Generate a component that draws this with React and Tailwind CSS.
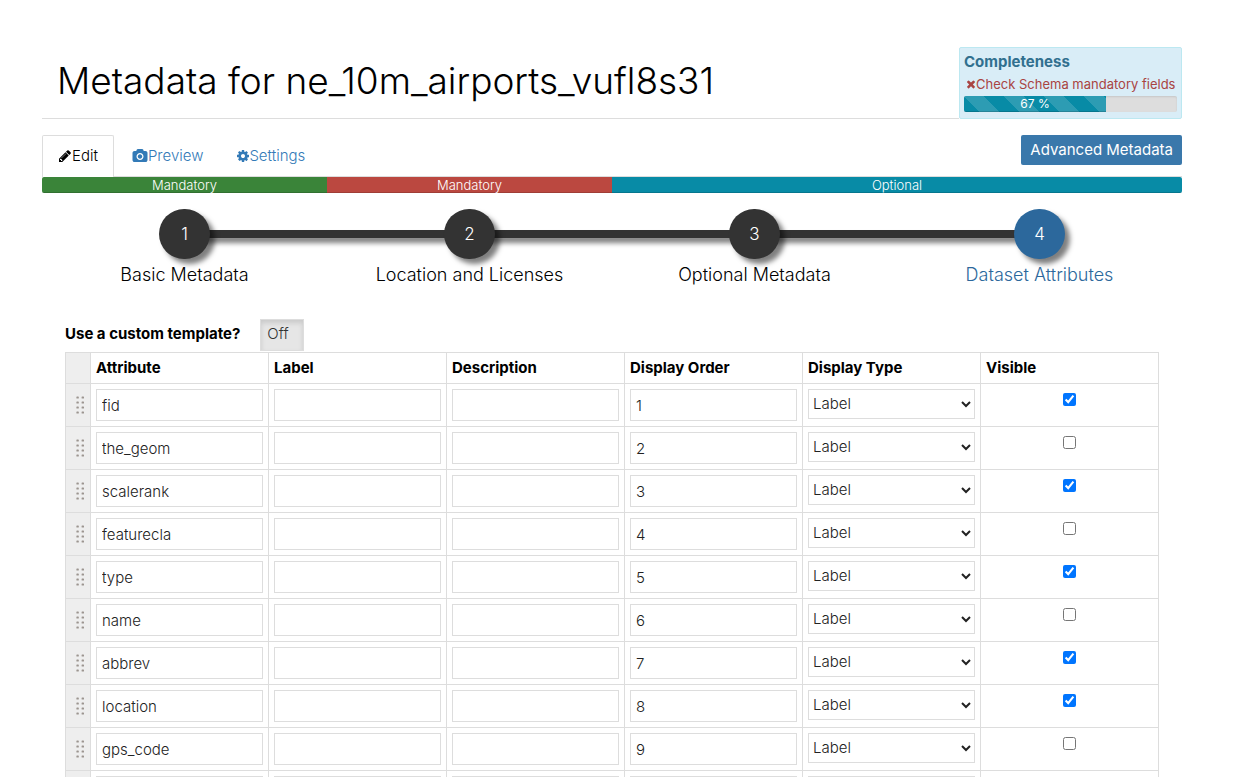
import React, { useState } from "react";

const ICONS = {
  pencil: {
    box: "128 0 1536 1792",
    d: "M491 1536l91-91-235-235-91 91v107h128v128h107zm523-928q0-22-22-22-10 0-17 7l-542 542q-7 7-7 17 0 22 22 22 10 0 17-7l542-542q7-7 7-17zm-54-192l416 416-832 832h-416v-416zm683 96q0 53-37 90l-166 166-416-416 166-165q36-38 90-38 53 0 91 38l235 234q37 39 37 91z",
  },
  camera: {
    box: "0 0 1920 1792",
    d: "M960 672q119 0 203.5 84.5t84.5 203.5-84.5 203.5-203.5 84.5-203.5-84.5-84.5-203.5 84.5-203.5 203.5-84.5zm704-416q106 0 181 75t75 181v896q0 106-75 181t-181 75h-1408q-106 0-181-75t-75-181v-896q0-106 75-181t181-75h224l51-136q19-49 69.5-84.5t103.5-35.5h512q53 0 103.5 35.5t69.5 84.5l51 136h224zm-704 1152q185 0 316.5-131.5t131.5-316.5-131.5-316.5-316.5-131.5-316.5 131.5-131.5 316.5 131.5 316.5 316.5 131.5z",
  },
  cog: {
    box: "128 0 1536 1792",
    d: "M1152 896q0-106-75-181t-181-75-181 75-75 181 75 181 181 75 181-75 75-181zm512-109v222q0 12-8 23t-20 13l-185 28q-19 54-39 91 35 50 107 138 10 12 10 25t-9 23q-27 37-99 108t-94 71q-12 0-26-9l-138-108q-44 23-91 38-16 136-29 186-7 28-36 28h-222q-14 0-24.5-8.5t-11.5-21.5l-28-184q-49-16-90-37l-141 107q-10 9-25 9-14 0-25-11-126-114-165-168-7-10-7-23 0-12 8-23 15-21 51-66.5t54-70.5q-27-50-41-99l-183-27q-13-2-21-12.5t-8-23.5v-222q0-12 8-23t19-13l186-28q14-46 39-92-40-57-107-138-10-12-10-24 0-10 9-23 26-36 98.5-107.5t94.5-71.5q13 0 26 10l138 107q44-23 91-38 16-136 29-186 7-28 36-28h222q14 0 24.5 8.5t11.5 21.5l28 184q49 16 90 37l142-107q9-9 24-9 13 0 25 10 129 119 165 170 7 8 7 22 0 12-8 23-15 21-51 66.5t-54 70.5q26 50 41 98l183 28q13 2 21 12.5t8 23.5z",
  },
  times: {
    box: "192 0 1408 1792",
    d: "M1490 1322q0 40-28 68l-136 136q-28 28-68 28t-68-28l-294-294-294 294q-28 28-68 28t-68-28l-136-136q-28-28-28-68t28-68l294-294-294-294q-28-28-28-68t28-68l136-136q28-28 68-28t68 28l294 294 294-294q28-28 68-28t68 28l136 136q28 28 28 68t-28 68l-294 294 294 294q28 28 28 68z",
  },
};

function Icon({ name, className }) {
  return (
    <svg viewBox={ICONS[name].box} className={className} fill="currentColor" aria-hidden="true">
      <path d={ICONS[name].d} />
    </svg>
  );
}

function Grip() {
  return (
    <svg viewBox="0 0 9 18" className="mr-[5px] ml-auto h-[18px] w-[9px]" fill="#9c9590" aria-hidden="true">
      {[0, 5, 10, 15].map((y) => (
        <g key={y}>
          <rect x="0.4" y={y + 0.5} width="2.4" height="2" rx="0.6" />
          <rect x="5.6" y={y + 0.5} width="2.4" height="2" rx="0.6" />
        </g>
      ))}
    </svg>
  );
}

const STEPS = ["Basic Metadata", "Location and Licenses", "Optional Metadata", "Dataset Attributes"];

const COLUMNS = ["Attribute", "Label", "Description", "Display Order", "Display Type", "Visible"];

const ATTRIBUTES = [
  ["fid", true],
  ["the_geom", false],
  ["scalerank", true],
  ["featurecla", false],
  ["type", true],
  ["name", false],
  ["abbrev", true],
  ["location", true],
  ["gps_code", false],
  ["iata_code", true],
];

const FIELD = "block h-8 w-full border border-[#ddd] bg-white px-[5px] text-[15px] text-[#222] outline-none";

function Completeness() {
  return (
    <section className="w-[223px] rounded-xs border border-[#bce8f1] bg-[#d9edf7] px-1 pt-1 pb-[6px]">
      <h2 className="text-[15px] leading-5 font-bold text-[#31708f]">Completeness</h2>
      <p className="flex items-center pl-[2px] text-[13px] leading-6 font-normal whitespace-nowrap text-[#a94442]">
        <Icon name="times" className="h-3 w-[10px] shrink-0" />
        Check Schema mandatory fields
      </p>
      <div className="h-4 overflow-hidden rounded-xs bg-[#ddd] shadow-[inset_0_1px_2px_rgba(0,0,0,0.1)]">
        <div className="h-4 w-2/3 bg-[#088ba6] bg-[linear-gradient(45deg,rgba(255,255,255,.15)_25%,transparent_25%,transparent_50%,rgba(255,255,255,.15)_50%,rgba(255,255,255,.15)_75%,transparent_75%,transparent)] bg-[length:40px_40px] text-center text-xs leading-4 font-normal text-white shadow-[inset_0_-1px_0_rgba(0,0,0,0.15)]">
          67 %
        </div>
      </div>
    </section>
  );
}

function Stepper() {
  return (
    <ol className="relative mt-4 grid grid-cols-4 before:absolute before:inset-x-[12.5%] before:top-[21px] before:h-2 before:bg-[#333] before:shadow-[0_5px_5px_rgba(0,0,0,0.5)]">
      {STEPS.map((step, i) => {
        const active = i === STEPS.length - 1;
        return (
          <li key={step} className="z-10 flex flex-col items-center">
            <button
              type="button"
              className={
                active
                  ? "h-[50px] w-[51px] rounded-full bg-[#2c689c] pt-px text-[17px] text-white shadow-[5px_5px_5px_rgba(0,0,0,0.5)]"
                  : "h-[50px] w-[51px] rounded-full bg-[#333] pt-px text-[17px] text-white shadow-[5px_5px_5px_rgba(0,0,0,0.5)]"
              }
            >
              {i + 1}
            </button>
            <p className={active ? "mt-1 text-lg leading-6 text-[#2c689c]" : "mt-1 text-lg leading-6 text-black"}>
              {step}
            </p>
          </li>
        );
      })}
    </ol>
  );
}

function AttributeRow({ name, order, initial }) {
  const [visible, setVisible] = useState(initial);
  return (
    <tr>
      <td className="border border-[#ddd] bg-[#eee]">
        <Grip />
      </td>
      <td className="border border-[#ddd] p-[5px]">
        <input aria-label="Attribute" className={FIELD} defaultValue={name} />
      </td>
      <td className="border border-[#ddd] p-[5px]">
        <input aria-label="Label" className={FIELD} />
      </td>
      <td className="border border-[#ddd] p-[5px]">
        <input aria-label="Description" className={FIELD} />
      </td>
      <td className="border border-[#ddd] p-[5px]">
        <input aria-label="Display Order" className={FIELD} defaultValue={order} />
      </td>
      <td className="border border-[#ddd] p-[5px] align-top">
        <select
          aria-label="Display Type"
          className="block h-[30px] w-full border border-[#ddd] bg-white pb-px text-[15px] text-[#222]"
        >
          <option>Label</option>
        </select>
      </td>
      <td className="border border-[#ddd] p-[5px] align-top">
        <input
          type="checkbox"
          aria-label="Visible"
          checked={visible}
          onChange={(e) => setVisible(e.target.checked)}
          className="mx-auto mt-1 block size-[13px]"
        />
      </td>
    </tr>
  );
}

export default function App() {
  const [custom, setCustom] = useState(false);
  return (
    <main className="h-screen overflow-hidden bg-white pt-[47px] pr-[76px] pl-[42px] font-['Inter',sans-serif] font-light text-black">
      <header className="flex items-start justify-between">
        <div className="flex-1 self-stretch border-b border-[#ddd] pt-[9px] pl-[15px]">
          <h1 className="text-[37px] leading-[50px] whitespace-nowrap">Metadata for ne_10m_airports_vufl8s31</h1>
        </div>
        <Completeness />
      </header>

      <div className="mt-4 flex items-end border-b border-[#ddd]">
        <nav className="flex text-[15px] leading-5">
          <a
            href="#edit"
            className="-mb-px flex items-center rounded-t-xs border border-b-0 border-[#ddd] bg-white px-[15px] pt-[10px] pb-[11px]"
          >
            <Icon name="pencil" className="h-[14px] w-[14px]" />
            Edit
          </a>
          <a href="#preview" className="flex items-center px-[18px] pt-[11px] pb-[10px] text-[#337ab7]">
            <Icon name="camera" className="h-[14px] w-4" />
            Preview
          </a>
          <a href="#settings" className="flex items-center px-4 pt-[11px] pb-[10px] text-[#337ab7]">
            <Icon name="cog" className="h-[14px] w-3" />
            Settings
          </a>
        </nav>
        <button
          type="button"
          className="mb-[11px] ml-auto h-[30px] rounded-xs bg-[#3a78ab] px-[9px] text-[15px] font-normal whitespace-nowrap text-white"
        >
          Advanced Metadata
        </button>
      </div>

      <div className="grid h-4 grid-cols-[1fr_1fr_2fr] overflow-hidden rounded-xs text-center text-[13px] leading-4 text-white">
        <div className="bg-[#3a8439] shadow-[inset_0_-1px_0_rgba(0,0,0,0.15)]">Mandatory</div>
        <div className="bg-[#bb4840] shadow-[inset_0_-1px_0_rgba(0,0,0,0.15)]">Mandatory</div>
        <div className="bg-[#088ba6] shadow-[inset_0_-1px_0_rgba(0,0,0,0.15)]">Optional</div>
      </div>

      <Stepper />

      <section className="px-[23px] pt-8">
        <div className="mb-px flex items-center">
          <label htmlFor="custom-template" className="w-[195px] pb-[2px] text-[15px] leading-6 font-bold">
            Use a custom template?
          </label>
          <button
            id="custom-template"
            type="button"
            aria-pressed={custom}
            onClick={() => setCustom(!custom)}
            className="h-8 w-11 border border-[#ddd] bg-[#e6e6e6] pr-2 pb-[2px] text-[15px] text-[#333] shadow-[inset_0_3px_5px_rgba(0,0,0,0.125)]"
          >
            {custom ? "On" : "Off"}
          </button>
        </div>
        <table className="w-full table-fixed border-collapse">
          <colgroup>
            <col className="w-[25px]" />
          </colgroup>
          <thead>
            <tr className="h-[31px] text-left text-[15px] leading-5">
              <th className="border border-[#ddd] bg-[#eee]" aria-label="Reorder" />
              {COLUMNS.map((c) => (
                <th key={c} className="border border-[#ddd] px-[5px] py-0 font-bold">
                  {c}
                </th>
              ))}
            </tr>
          </thead>
          <tbody>
            {ATTRIBUTES.map(([name, initial], i) => (
              <AttributeRow key={name} name={name} order={i + 1} initial={initial} />
            ))}
          </tbody>
        </table>
      </section>
    </main>
  );
}
